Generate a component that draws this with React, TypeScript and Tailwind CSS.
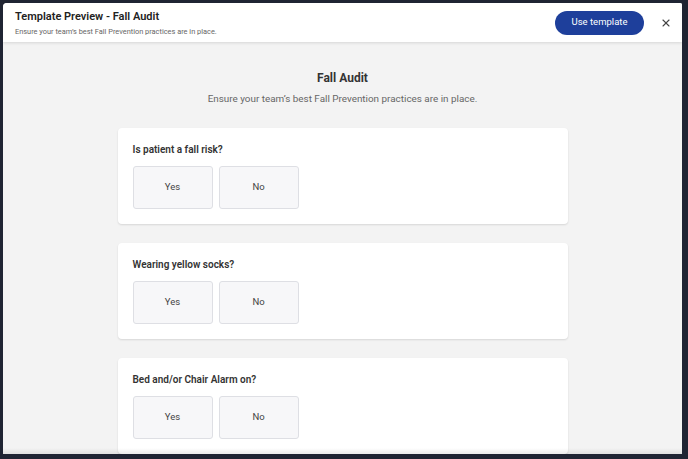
import React from "react";
import { X } from "lucide-react";

const questions = [
  "Is patient a fall risk?",
  "Wearing yellow socks?",
  "Bed and/or Chair Alarm on?",
];

function QuestionCard({ title }: { title: string }) {
  return (
    <div className="bg-white rounded-[4px] shadow-[0_1px_2px_rgba(0,0,0,0.12)] px-[15px] pt-[15px] pb-[15px]">
      <p className="text-[10px] font-semibold text-[#333] leading-[14px]">{title}</p>
      <div className="flex gap-[6px] mt-[9px]">
        <button className="w-[80px] h-[43px] rounded-[3px] border border-[#dedfe4] bg-[#f7f7f9] text-[9.5px] text-[#444]">
          Yes
        </button>
        <button className="w-[80px] h-[43px] rounded-[3px] border border-[#dedfe4] bg-[#f7f7f9] text-[9.5px] text-[#444]">
          No
        </button>
      </div>
    </div>
  );
}

export default function App() {
  return (
    <div
      className="w-[688px] h-[459px] bg-[#1f2433] pt-[3px] pl-[3px] pr-[6px] pb-[5px] overflow-hidden"
      style={{ fontFamily: "Roboto, 'Liberation Sans', sans-serif" }}
    >
      <div className="h-full flex flex-col rounded-tl-[4px] rounded-tr-[2px] overflow-hidden bg-[#f3f3f3]">
        <div className="relative z-10 h-[39px] shrink-0 bg-white flex items-center justify-between pl-[12px] pr-[10px] shadow-[0_1px_3px_rgba(0,0,0,0.12)]">
          <div className="flex flex-col pt-[1px]">
            <h1 className="text-[11px] font-semibold text-[#222] leading-[14px]">
              Template Preview - Fall Audit
            </h1>
            <p className="text-[7.4px] text-[#666] leading-[10px] mt-[3px]">
              Ensure your team’s best Fall Prevention practices are in place.
            </p>
          </div>
          <div className="flex items-center gap-[16px]">
            <button className="h-[24px] w-[89px] rounded-full bg-[#1e3f9b] text-white text-[9.5px]">
              Use template
            </button>
            <X size={12} strokeWidth={2.2} className="text-[#444]" />
          </div>
        </div>
        <div className="relative flex-1 overflow-hidden">
          <div className="flex flex-col items-center pt-[29px]">
            <h2 className="text-[12px] font-bold text-[#333] leading-[14px]">Fall Audit</h2>
            <p className="text-[9.9px] text-[#666] leading-[12px] mt-[8px]">
              Ensure your team’s best Fall Prevention practices are in place.
            </p>
            <div className="w-[450px] mt-[23px] flex flex-col gap-[19px]">
              {questions.map((q) => (
                <QuestionCard key={q} title={q} />
              ))}
            </div>
          </div>
          <div className="absolute bottom-0 left-0 right-0 h-[6px] bg-gradient-to-b from-transparent to-[rgba(0,0,0,0.08)]" />
        </div>
      </div>
    </div>
  );
}
